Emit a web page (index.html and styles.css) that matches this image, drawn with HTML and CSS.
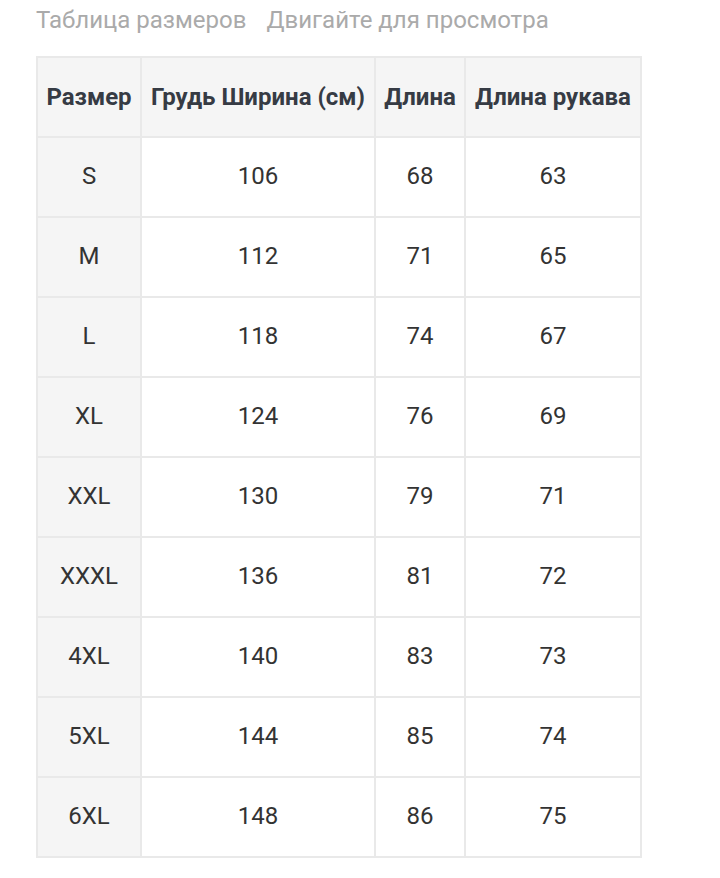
FILE: index.html
```html
<!DOCTYPE html>
<html lang="ru">
<head>
<meta charset="utf-8">
<link rel="stylesheet" href="styles.css">
</head>
<body>
<div class="page">
  <div class="title">
    <span>Таблица размеров</span>
    <span>Двигайте для просмотра</span>
  </div>
  <table class="sizes">
    <colgroup>
      <col class="c1"><col class="c2"><col class="c3"><col class="c4">
    </colgroup>
    <thead>
      <tr><th>Размер</th><th>Грудь Ширина (см)</th><th>Длина</th><th>Длина рукава</th></tr>
    </thead>
    <tbody>
      <tr><td class="size">S</td><td>106</td><td>68</td><td>63</td></tr>
      <tr><td class="size">M</td><td>112</td><td>71</td><td>65</td></tr>
      <tr><td class="size">L</td><td>118</td><td>74</td><td>67</td></tr>
      <tr><td class="size">XL</td><td>124</td><td>76</td><td>69</td></tr>
      <tr><td class="size">XXL</td><td>130</td><td>79</td><td>71</td></tr>
      <tr><td class="size">XXXL</td><td>136</td><td>81</td><td>72</td></tr>
      <tr><td class="size">4XL</td><td>140</td><td>83</td><td>73</td></tr>
      <tr><td class="size">5XL</td><td>144</td><td>85</td><td>74</td></tr>
      <tr><td class="size">6XL</td><td>148</td><td>86</td><td>75</td></tr>
    </tbody>
  </table>
</div>
</body>
</html>
```
FILE: styles.css
```css
html, body {
  margin: 0;
  padding: 0;
  background: #fff;
  font-family: Roboto, "Noto Sans", sans-serif;
}
.page {
  padding: 5px 0 0 36px;
}
.title {
  display: flex;
  gap: 20px;
  font-size: 24px;
  line-height: 30px;
  color: #aaaaaa;
  height: 51px;
}
.sizes {
  border-collapse: collapse;
  table-layout: fixed;
  width: 606px;
  border: 2px solid #e9e9e9;
}
.c1 { width: 104px; }
.c2 { width: 234px; }
.c3 { width: 90px; }
.c4 { width: 176px; }
.sizes th, .sizes td {
  border: 2px solid #e9e9e9;
  padding: 0;
  text-align: center;
  vertical-align: middle;
}
.sizes th {
  background: #f5f5f5;
  font-weight: 700;
  font-size: 24px;
  color: #363b44;
  white-space: nowrap;
  height: 77px;
  padding-bottom: 1px;
}
.sizes td {
  font-size: 24px;
  color: #333333;
  height: 75px;
  padding-bottom: 3px;
}
.sizes td.size {
  background: #f5f5f5;
}
```
